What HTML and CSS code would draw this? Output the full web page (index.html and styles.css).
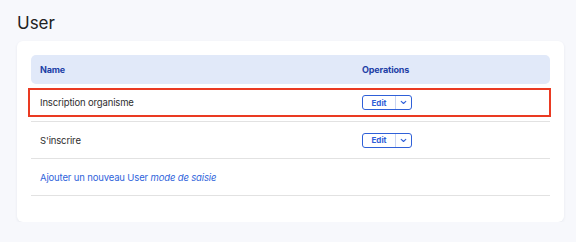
FILE: index.html
```html
<!DOCTYPE html>
<html lang="fr">
<head>
  <meta charset="UTF-8" />
  <title>User</title>
  <link rel="stylesheet" href="styles.css">
</head>
<body>

  <h1 class="page-title">User</h1>

  <div class="card">
    <div class="list">
      <div class="list-head">
        <div class="col-name">Name</div>
        <div class="col-ops">Operations</div>
      </div>

      <div class="list-row is-highlighted">
        <div class="col-name">Inscription organisme</div>
        <div class="col-ops">
          <div class="split-btn">
            <a href="#" class="split-main">Edit</a>
            <a href="#" class="split-toggle">
              <svg width="7" height="5" viewBox="0 0 7 5"><path d="M1.2 1.3 3.5 3.5 5.8 1.3" fill="none" stroke="currentColor" stroke-width="1.1" stroke-linecap="round" stroke-linejoin="round"/></svg>
            </a>
          </div>
        </div>
      </div>

      <div class="list-row">
        <div class="col-name">S'inscrire</div>
        <div class="col-ops">
          <div class="split-btn">
            <a href="#" class="split-main">Edit</a>
            <a href="#" class="split-toggle">
              <svg width="7" height="5" viewBox="0 0 7 5"><path d="M1.2 1.3 3.5 3.5 5.8 1.3" fill="none" stroke="currentColor" stroke-width="1.1" stroke-linecap="round" stroke-linejoin="round"/></svg>
            </a>
          </div>
        </div>
      </div>

      <div class="list-row">
        <div class="col-name">
          <a href="#" class="add-link">Ajouter un nouveau User <em>mode de saisie</em></a>
        </div>
      </div>
    </div>
  </div>

</body>
</html>
```

FILE: styles.css
```css
body {
  margin: 0;
  padding: 13px 12px 0 17px;
  font-family: Inter, "Noto Sans", sans-serif;
  background-color: #f7f8fc;
  color: #2e2e2e;
}

.page-title {
  margin: 0 0 8px;
  font-size: 17px;
  line-height: 20px;
  font-weight: 400;
  color: #222;
}

.card {
  background: #fff;
  border-radius: 6px;
  padding: 14px 14px 26px;
  box-shadow: 0 1px 3px rgba(40, 50, 90, 0.08);
}

.list {
  font-size: 9.5px;
  letter-spacing: -0.15px;
}

.list-head {
  display: flex;
  align-items: center;
  height: 29px;
  background: #e1e9f9;
  border-radius: 5px;
  font-weight: 700;
  font-size: 9px;
  color: #1d40a6;
}

.list-row {
  position: relative;
  display: flex;
  align-items: center;
  height: 36px;
  border-bottom: 1px solid #e2e2e2;
}

.list-head + .list-row {
  height: 37px;
}

.is-highlighted::after {
  content: "";
  position: absolute;
  top: 4px;
  bottom: 4px;
  left: -3px;
  right: -1px;
  border: 2px solid #ea3a22;
  pointer-events: none;
}

.col-name {
  width: 313px;
  padding-left: 9px;
}

.col-ops {
  padding-left: 9px;
}

.split-btn {
  display: flex;
  width: 48px;
  height: 13px;
  border: 1px solid #2f60d8;
  border-radius: 3px;
}

.split-main,
.split-toggle {
  display: flex;
  align-items: center;
  justify-content: center;
  color: #2f60d8;
  text-decoration: none;
}

.split-main {
  flex: 1;
  font-size: 8px;
  font-weight: 700;
  letter-spacing: 0;
  border-right: 1px solid #c8d4f2;
}

.split-toggle {
  width: 15px;
}

.add-link {
  color: #2f64db;
  text-decoration: none;
}
```
